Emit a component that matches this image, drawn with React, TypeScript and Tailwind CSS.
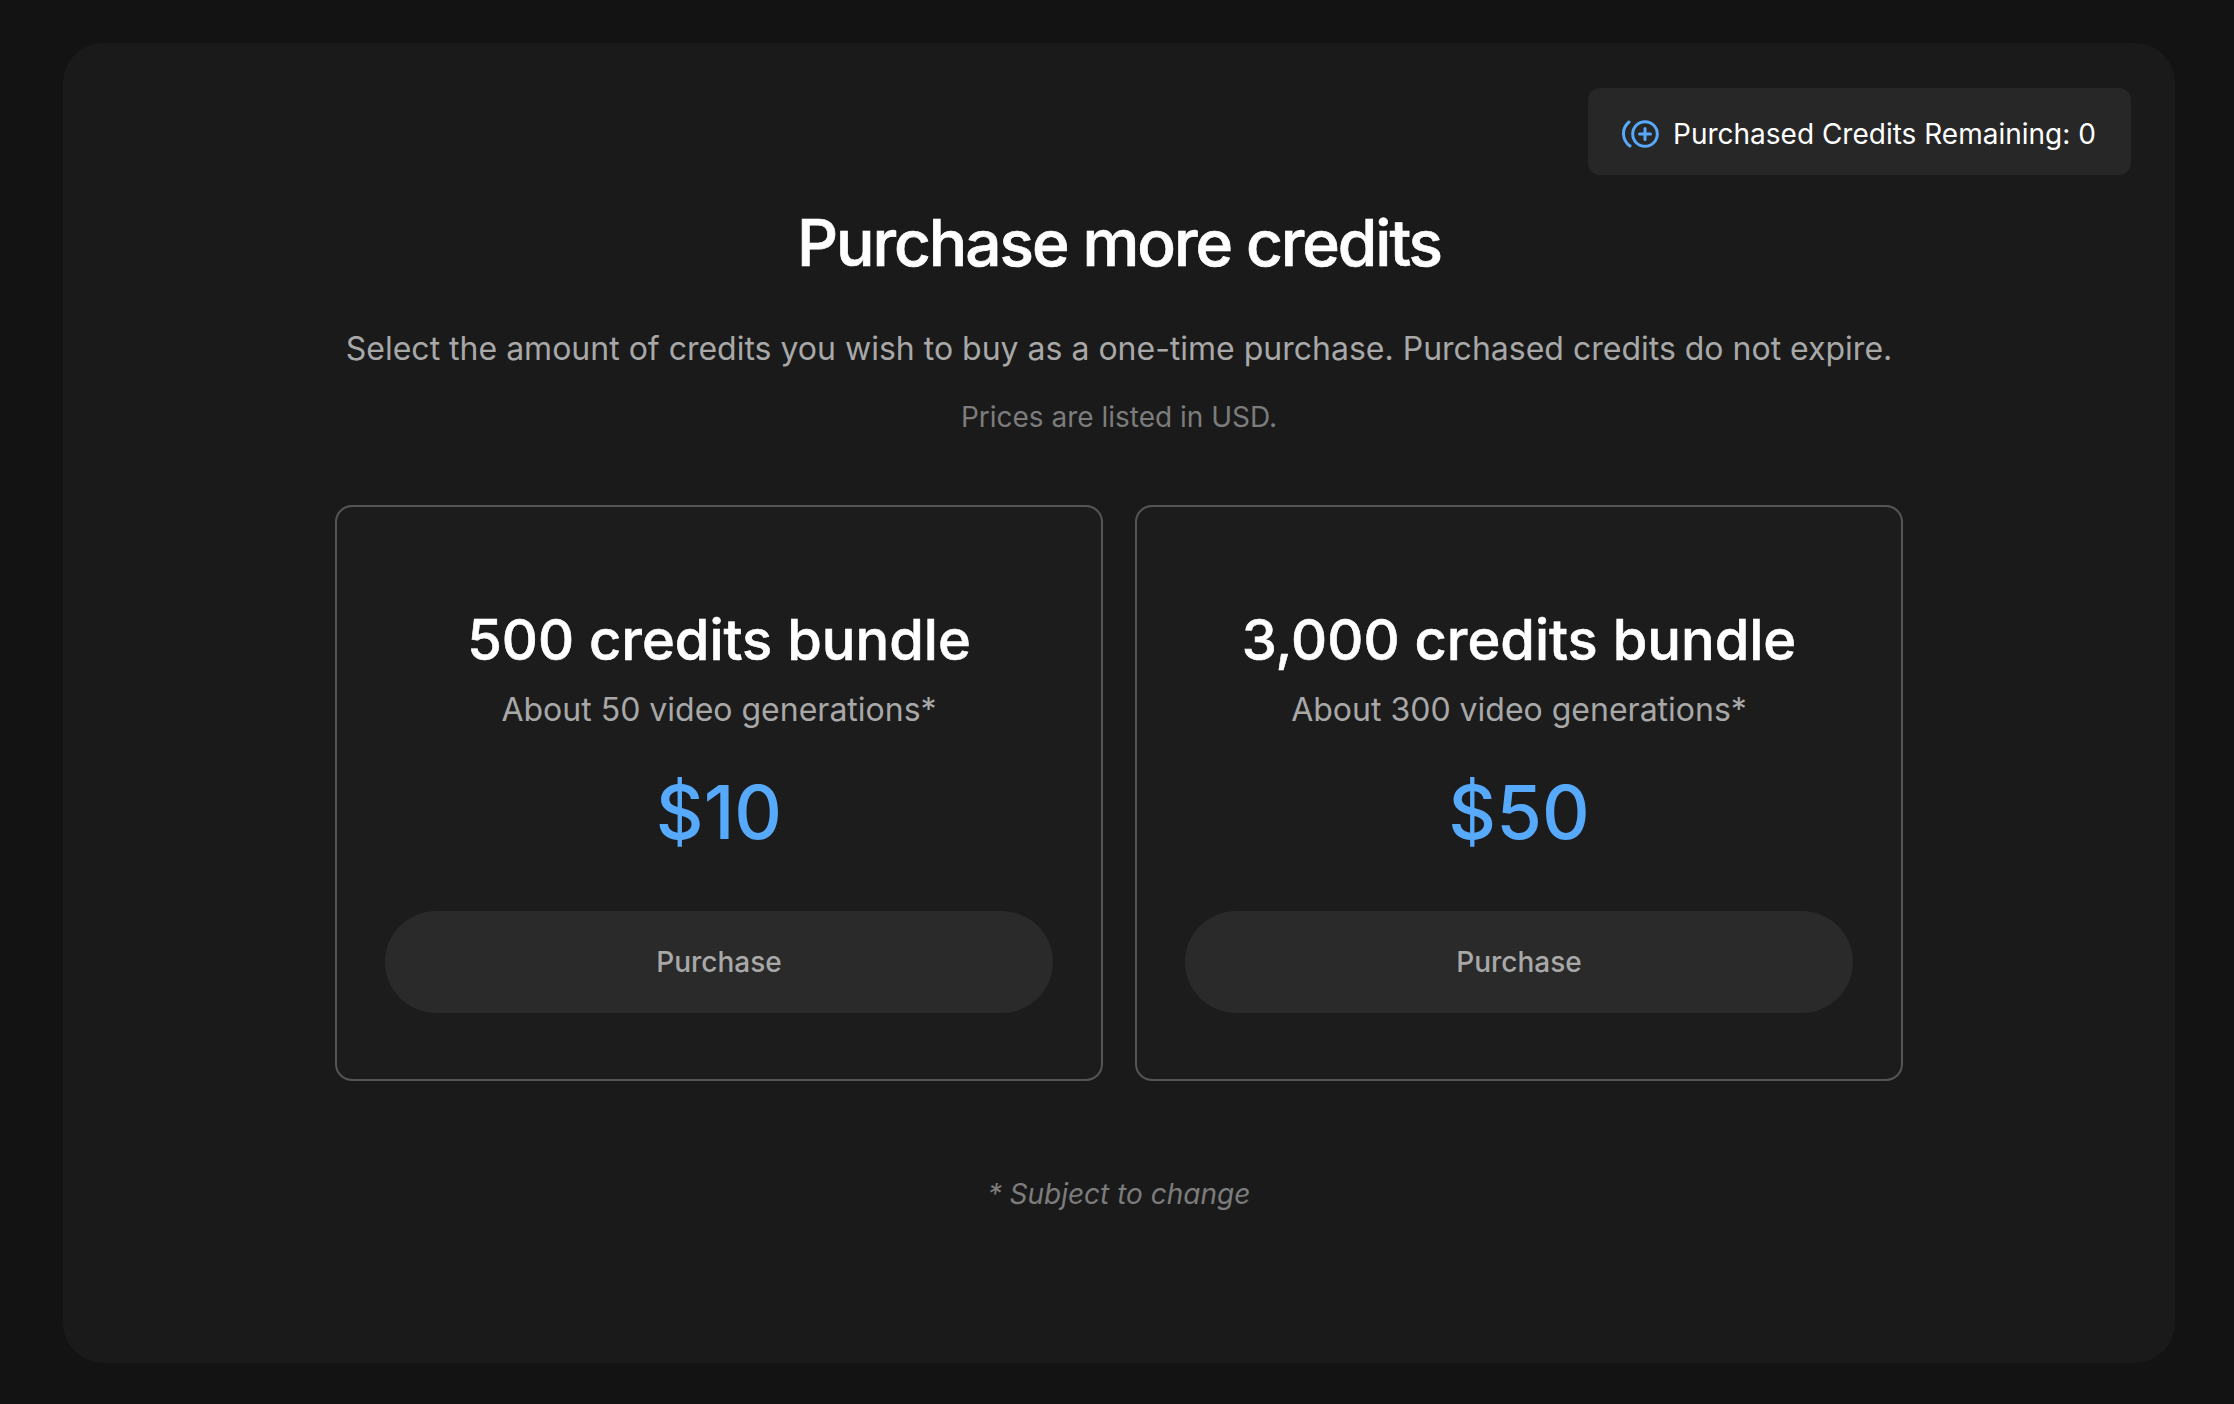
const font = { fontFamily: "Inter, sans-serif" };

function CreditIcon() {
  return (
    <svg width="38" height="28" viewBox="0 0 38 28" fill="none" stroke="#56a9fb" strokeWidth="3" strokeLinecap="round">
      <circle cx="24" cy="14" r="12.3" />
      <path d="M24 8.5v11M18.5 14h11" />
      <path d="M8 2C0.5 8 0.5 20 9 26" />
    </svg>
  );
}

function Bundle({ title, sub, price }: { title: string; sub: string; price: string }) {
  return (
    <div className="w-[768px] h-[576px] rounded-[17px] border-2 border-[#555555] bg-[#1c1c1c] px-[48px] pt-[100px] flex flex-col items-center">
      <div className="text-[56px] leading-[66px] font-medium [-webkit-text-stroke:0.6px_#ffffff] text-white">{title}</div>
      <div className="mt-[15px] text-[32px] leading-[44px] text-[#a8a8a8]">{sub}</div>
      <div className="mt-[35px] text-[74px] leading-[90px] font-medium text-[#56a9fb]">{price}</div>
      <button className="mt-[54px] w-full h-[102px] rounded-full bg-[#2a2a2a] text-[28px] font-medium text-[#a8a8a8]">Purchase</button>
    </div>
  );
}

export default function App() {
  return (
    <div style={font} className="w-[2234px] h-[1404px] bg-[#131313] pl-[63px] pr-[59px] pt-[43px] pb-[41px] overflow-hidden">
      <div className="h-full rounded-[40px] bg-[#1a1a1a] pt-[45px] px-[44px] flex flex-col items-center">
        <div className="self-end h-[87px] w-[543px] rounded-[12px] bg-[#272727] flex items-center pl-[33px] pt-[5px] gap-[14px] text-[28px] text-white">
          <CreditIcon />
          <span>Purchased Credits Remaining: 0</span>
        </div>
        <h1 className="mt-[29px] text-[64px] leading-[78px] font-medium tracking-[-2.05px] [-webkit-text-stroke:0.7px_#ffffff] text-white">Purchase more credits</h1>
        <p className="mt-[45px] text-[32px] leading-[44px] text-[#a8a8a8]">Select the amount of credits you wish to buy as a one-time purchase. Purchased credits do not expire.</p>
        <p className="mt-[26px] text-[28px] leading-[40px] text-[#7c7c7c]">Prices are listed in USD.</p>
        <div className="mt-[68px] flex gap-[32px]">
          <Bundle title="500 credits bundle" sub="About 50 video generations*" price="$10" />
          <Bundle title="3,000 credits bundle" sub="About 300 video generations*" price="$50" />
        </div>
        <p className="mt-[93px] text-[28px] leading-[40px] italic text-[#7c7c7c]">* Subject to change</p>
      </div>
    </div>
  );
}
